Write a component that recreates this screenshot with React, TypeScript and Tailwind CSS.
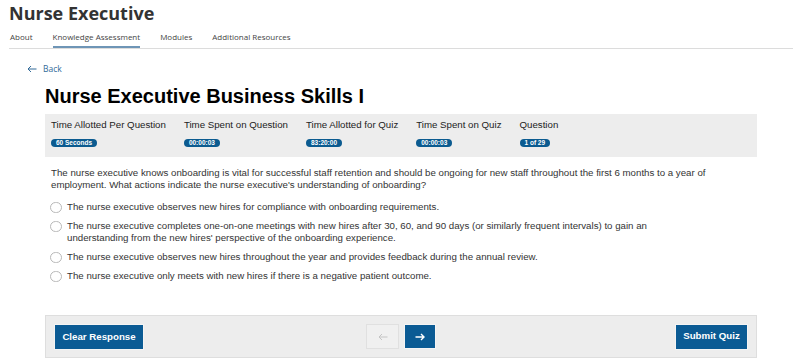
import { useState } from "react";

const STATS = [
  { label: "Time Allotted Per Question", value: "60 Seconds" },
  { label: "Time Spent on Question", value: "00:00:03" },
  { label: "Time Allotted for Quiz", value: "83:20:00" },
  { label: "Time Spent on Quiz", value: "00:00:03" },
  { label: "Question", value: "1 of 29" },
];

const OPTIONS = [
  "The nurse executive observes new hires for compliance with onboarding requirements.",
  "The nurse executive completes one-on-one meetings with new hires after 30, 60, and 90 days (or similarly frequent intervals) to gain an understanding from the new hires' perspective of the onboarding experience.",
  "The nurse executive observes new hires throughout the year and provides feedback during the annual review.",
  "The nurse executive only meets with new hires if there is a negative patient outcome.",
];

const TABS = ["About", "Knowledge Assessment", "Modules", "Additional Resources"];

export default function App() {
  const [selected, setSelected] = useState<number | null>(null);

  return (
    <div className="w-[800px] h-[361px] overflow-hidden bg-white">
      <div className="pl-[9px] pr-[7px]">
        <h1 className="text-[18px] leading-[26px] font-bold text-[#333] font-['Open_Sans',sans-serif]">
          Nurse Executive
        </h1>
        <div className="flex gap-[20px] pl-[1px] border-b border-[#dcdcdc] font-['Open_Sans',sans-serif] text-[8px] text-[#444]">
          {TABS.map((t, i) => (
            <div
              key={t}
              className={
                "h-[22px] flex items-center " +
                (i === 1 ? "border-b-2 border-[#6e95b6] pt-[2px] -mb-px" : "")
              }
            >
              {t}
            </div>
          ))}
        </div>
      </div>

      <div className="pl-[27px] mt-[13px] flex items-center gap-[6px] h-[14px] text-[8.5px] text-[#336b99] font-['Open_Sans',sans-serif]">
        <svg width="10" height="8" viewBox="0 0 10 8" fill="none" stroke="#336b99" strokeWidth="1">
          <path d="M9.5 4H1M4 1L1 4l3 3" />
        </svg>
        <span>Back</span>
      </div>

      <div className="ml-[45px] w-[712px] font-['Liberation_Sans',Arial,sans-serif] text-[#333]">
        <h2 className="mt-[7px] text-[20px] leading-[26px] font-bold text-black">
          Nurse Executive Business Skills I
        </h2>

        <div className="mt-[5px] h-[43px] bg-[#ededed] px-[6px] pt-[5px] flex gap-[18px]">
          {STATS.map((s) => (
            <div key={s.label} className="flex flex-col">
              <span className="text-[9.7px] leading-[12px] text-[#222]">{s.label}</span>
              <span className="mt-[8px] self-start rounded-full bg-[#0b5b90] text-white font-bold text-[6.5px] leading-[8px] h-[8px] px-[5px]">
                {s.value}
              </span>
            </div>
          ))}
        </div>

        <p className="mt-[10px] pl-[6px] pr-[40px] text-[9.7px] leading-[12px] text-[#333]">
          The nurse executive knows onboarding is vital for successful staff retention and should be ongoing for new staff throughout the first 6 months to a year of employment. What actions indicate the nurse executive's understanding of onboarding?
        </p>

        <div className="mt-[10px] pl-[5px] flex flex-col gap-[7px]">
          {OPTIONS.map((o, i) => (
            <label key={i} className="flex items-start gap-[5px] cursor-pointer" onClick={() => setSelected(i)}>
              <span className="mt-px w-[12px] h-[11px] shrink-0 rounded-full border border-[#b8b8b8] bg-white flex items-center justify-center">
                {selected === i && <span className="w-[5px] h-[5px] rounded-full bg-[#0b5b90]" />}
              </span>
              <span className="text-[9.7px] leading-[12px] text-[#333] pr-[90px]">{o}</span>
            </label>
          ))}
        </div>

        <div className="mt-[33px] h-[43px] bg-[#ededed] border border-[#dedede] flex items-center px-[8px]">
          <div className="flex-1">
            <button
              onClick={() => setSelected(null)}
              className="h-[26px] w-[90px] bg-[#0b5b94] text-white font-bold text-[9.7px] border border-[#f4f4f4]"
            >
              Clear Response
            </button>
          </div>
          <div className="flex gap-[5px]">
            <button className="h-[25px] w-[33px] bg-[#f0f0f0] border border-[#e0e0e0] flex items-center justify-center">
              <svg width="10" height="8" viewBox="0 0 10 8" fill="none" stroke="#c4c4c4" strokeWidth="1">
                <path d="M9.5 4H1M4 1L1 4l3 3" />
              </svg>
            </button>
            <button className="h-[25px] w-[32px] bg-[#0b5b94] border border-[#f4f4f4] flex items-center justify-center">
              <svg width="10" height="8" viewBox="0 0 10 8" fill="none" stroke="white" strokeWidth="1.4">
                <path d="M0.5 4H9M6 1l3 3-3 3" />
              </svg>
            </button>
          </div>
          <div className="flex-1 flex justify-end">
            <button className="h-[26px] w-[73px] bg-[#0b5b94] text-white font-bold text-[9.7px] border border-[#f4f4f4]">
              Submit Quiz
            </button>
          </div>
        </div>
      </div>
    </div>
  );
}
